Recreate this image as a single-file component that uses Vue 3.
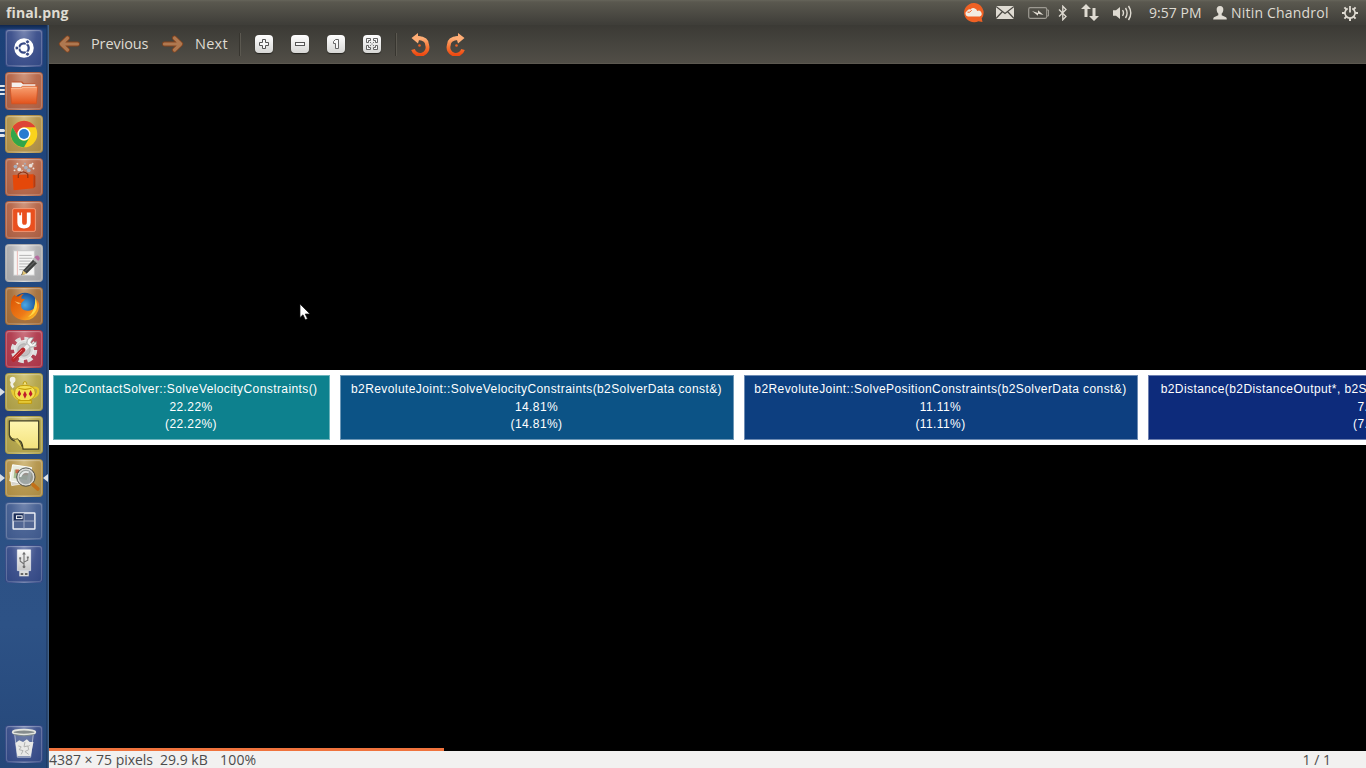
<script setup>
const nodes = [
  { name: 'b2ContactSolver::SolveVelocityConstraints()', pct: '22.22%', cls: 'teal' },
  { name: 'b2RevoluteJoint::SolveVelocityConstraints(b2SolverData const&)', pct: '14.81%', cls: 'azure' },
  { name: 'b2RevoluteJoint::SolvePositionConstraints(b2SolverData const&)', pct: '11.11%', cls: 'blue' },
  { name: 'b2Distance(b2DistanceOutput*, b2SimplexCache*, b2DistanceInput const*)', pct: '7.41%', cls: 'navy' }
]
const confetti = [[10, 8, 2], [14, 11, 2], [18, 7, 1], [21, 9, 2], [26, 7, 2], [29, 10, 1], [24, 12, 2], [17, 13, 1], [12, 5, 1], [20, 5, 1], [28, 5, 1], [9, 12, 1]]
</script>

<template>
  <div class="screen">
    <svg class="defs" width="0" height="0">
      <defs>
        <linearGradient id="orange" x1="0" y1="0" x2="0" y2="1"><stop offset="0" stop-color="#f9a273" /><stop offset="1" stop-color="#e2531c" /></linearGradient>
        <linearGradient id="hot" x1="0" y1="0" x2="0" y2="1"><stop offset="0" stop-color="#ffb078" /><stop offset=".55" stop-color="#f57433" /><stop offset="1" stop-color="#ee4a12" /></linearGradient>
        <linearGradient id="arrow" x1="0" y1="0" x2="0" y2="1"><stop offset="0" stop-color="#b98a66" /><stop offset="1" stop-color="#a8663f" /></linearGradient>
        <linearGradient id="silver" x1="0" y1="0" x2="0" y2="1"><stop offset="0" stop-color="#fafafa" /><stop offset="1" stop-color="#c7c7c7" /></linearGradient>
        <linearGradient id="note" x1="0" y1="0" x2="0" y2="1"><stop offset="0" stop-color="#fff6b0" /><stop offset="1" stop-color="#f3e27c" /></linearGradient>
        <radialGradient id="globe"><stop offset="0" stop-color="#4ca8e4" /><stop offset="1" stop-color="#174c94" /></radialGradient>
        <linearGradient id="fox" x1="0" y1="0" x2="1" y2="1"><stop offset="0" stop-color="#d95000" /><stop offset=".6" stop-color="#ee7a18" /><stop offset="1" stop-color="#ffd52e" /></linearGradient>
      </defs>
    </svg>

    <header class="panel">
      <span class="title">final.png</span>
      <div class="tray">
        <svg class="cloud" width="21" height="20" viewBox="0 0 21 20"><path d="M10.5 0a10 9.6 0 1 0 5 18.2l4 .8-.8-3.6A9.7 9.7 0 0 0 10.5 0Z" fill="#ef6124" /><path d="M5 13.5a3 3 0 0 1-1-5.6 3 3 0 0 1 3.5-1.5 4 4 0 0 1 6.8 1.5 3 3 0 0 1 2.5 5.6Z" fill="#f2ece2" /><path d="M4.5 9.2h2.2l2-2" fill="none" stroke="#ef6124" /></svg>
        <svg class="mail" width="18" height="13" viewBox="0 0 18 13"><path d="M0 0h18v13H0Z" fill="#dfdbd2" /><path d="m0 .5 9 7 9-7M0 12.5l6.5-7M18 12.5l-6.5-7" fill="none" stroke="#4b4943" stroke-width="1.2" /></svg>
        <svg class="battery" width="22" height="12" viewBox="0 0 22 12"><rect x=".7" y=".7" width="18" height="10.6" rx="1.5" fill="none" stroke="#9d9a92" stroke-width="1.2" /><path d="M19 3h1.5v6H19" fill="none" stroke="#9d9a92" /><path d="m4 4 6 2 0-2.8L15.5 8 10 6.7v2Z" fill="#e2ddd3" /></svg>
        <svg class="bt" width="10" height="16" viewBox="0 0 10 16"><path d="m1 4.5 7 7L4.8 14.8V1.2L8 4.5l-7 7" fill="none" stroke="#dfdbd2" stroke-width="1.3" /></svg>
        <svg class="net" width="18" height="17" viewBox="0 0 18 17"><path d="M5 0 0 5h3.5v8h3V5H10ZM13 17l5-5h-3.5V4h-3v8H8Z" fill="#dfdbd2" /></svg>
        <svg class="vol" width="21" height="16" viewBox="0 0 21 16"><path d="M1 5.3h3L8 2v12l-4-3.3H1Z" fill="#dfdbd2" /><path d="M10.5 5.2q2 2.8 0 5.6M13.5 3q3.2 5 0 10M16.5 1q4.6 7 0 14" fill="none" stroke="#dfdbd2" stroke-width="1.4" /></svg>
        <span class="clock">9:57 PM</span>
        <svg class="user" width="14" height="14" viewBox="0 0 14 14"><path d="M7 0C4.5 0 3.4 1.8 3.7 4c.2 2 .8 3 1.6 3.6v1.7L1 11.2Q.2 11.7.2 13.5h13.6q0-1.8-.8-2.3L8.7 9.3V7.6C9.5 7 10.1 6 10.3 4 10.6 1.8 9.5 0 7 0Z" fill="#dfdbd2" /></svg>
        <span class="username">Nitin Chandrol</span>
        <svg class="gear" width="16" height="16" viewBox="0 0 16 16"><g stroke="#dfdbd2" fill="none"><path d="M5.7 3.4a5.1 5.1 0 1 0 4.6 0" stroke-width="1.7" /><path d="M8 1v6.5" stroke-width="1.8" /><path d="M0 8h3M13 8h3M8 13v3M2.4 2.4l2 2M13.6 2.4l-2 2M2.4 13.6l2-2M13.6 13.6l-2-2" stroke-width="2" /></g></svg>
      </div>
    </header>

    <div class="body">
      <nav class="launcher">
        <div class="tile indigo">
          <svg viewBox="0 0 38 38"><circle cx="19" cy="19" r="10.3" fill="#fff" /><circle cx="19" cy="19" r="5" fill="none" stroke="#374985" stroke-width="2.4" /><path d="M19 19h-7M19 19l3.6-6.2M19 19l3.6 6.2" stroke="#fff" stroke-width="1" /><g fill="#374985" stroke="#fff"><circle cx="11.5" cy="19" r="2.1" /><circle cx="22.7" cy="12.5" r="2.1" /><circle cx="22.7" cy="25.5" r="2.1" /></g></svg>
        </div>
        <div class="tile rust">
          <div class="pips"><i /><i /><i /></div>
          <svg viewBox="0 0 38 38"><path d="M6 31V11l1-2h10l2 2h12v20Z" fill="#c15127" /><path d="M6 16v-6h10l2 2h13v4Z" fill="#f5f1ed" /><path d="M4.5 15.5h11l2-1.5h16L32 32.5H6Z" fill="url(#orange)" stroke="#d45220" stroke-width=".8" /><path d="M5.5 16.5H16l2-1.3h14" fill="none" stroke="#fbc09a" /></svg>
        </div>
        <div class="tile gold">
          <div class="pips two"><i /><i /></div>
          <svg viewBox="0 0 38 38"><circle cx="19" cy="19" r="14" fill="#f9d21c" /><path d="M6.9 12A14 14 0 0 1 31.1 12H19a7 7 0 0 0-6 10.5Z" fill="#dd4435" /><path d="M6.9 12A14 14 0 0 0 19 33l6-10.5a7 7 0 0 1-12 0Z" fill="#31a64a" /><circle cx="19" cy="19" r="6.8" fill="#fff" /><circle cx="19" cy="19" r="5.3" fill="#297cd0" /></svg>
        </div>
        <div class="tile rust">
          <svg viewBox="0 0 38 38"><g><circle v-for="(c, i) in confetti" :key="i" :cx="c[0]" :cy="c[1]" :r="c[2]" :fill="i % 3 ? '#e9e0da' : '#a7aebb'" /></g><path d="m7 17 22-1v15l-21 2Z" fill="#e4480a" /><path d="m29 16 2 2v11l-2 2Z" fill="#b93a0c" /><path d="M13 20v-4q5-5 10 0v4" fill="none" stroke="#8e3212" stroke-width="1.3" /></svg>
        </div>
        <div class="tile rust">
          <svg viewBox="0 0 38 38"><rect x="7" y="7" width="24" height="24" rx="1.5" fill="#e9501f" stroke="#f69c78" /><path d="M12 11h5v10q0 3 2.5 3t2.5-3V11h4v11q0 6-7 6t-7-6Z" fill="#fff" /><path d="M14 10h2v4h-2Z" fill="#e9501f" /></svg>
        </div>
        <div class="tile grey">
          <svg viewBox="0 0 38 38"><path d="M8 6h22v26H8Z" fill="#f5f5f4" stroke="#c5c5c5" /><path d="M12 6v26" stroke="#eab7b2" /><path d="M14 11h13M14 14h14M14 17h12M14 20h13M14 23h8M14 26h7" stroke="#aaa" stroke-width=".9" /><path d="m18 27 11-12 4 4-11 11-6 2Z" fill="#3d3f3e" /><path d="m18 27 4 3-5 2Z" fill="#e3c678" /><path d="m28 15 2-2 4 4-2 2Z" fill="#b8b8b8" /><path d="m30 13 1.5-1.5q2-1 3.5 1t0 3L34 17Z" fill="#b66c9f" /><path d="m20 28 11-11" stroke="#777" /></svg>
        </div>
        <div class="tile fire">
          <svg viewBox="0 0 38 38"><circle cx="20" cy="18" r="13" fill="url(#globe)" /><path d="M9 7q1 2 4 2 3-3 6-3-3 2-3 5l4 1-4 4q-1 8 7 8 5 0 8-4 2-4 1-8 5 5 2 12-4 10-14 10C9 34 4 26 5 18q0-7 4-11Z" fill="url(#fox)" /><path d="M31 10q6 15-8 21 8-6 8-21Z" fill="#ffd945" /><path d="m9 14 7 2-3 1Z" fill="#fac36b" /></svg>
        </div>
        <div class="tile red">
          <svg viewBox="0 0 38 38"><circle cx="19" cy="20" r="11.5" fill="none" stroke="#ddd" stroke-width="5" stroke-dasharray="5.42 3.61" /><circle cx="19" cy="20" r="10" fill="#d9d9d9" stroke="#f0f0f0" /><circle cx="19" cy="20" r="6.5" fill="#c3bfc0" stroke="#aaa" /><path d="m17 22 9-9" stroke="#ececec" stroke-width="4" /><path d="M29 7q-7-1-7 6l4 4q7 0 6-6l-4 3-2-2Z" fill="#f5f5f5" stroke="#888" stroke-width=".7" /><path d="m8 30 10-10" stroke="#b8282c" stroke-width="5" stroke-linecap="round" /><path d="m8 29 9-9" stroke="#ec7771" /></svg>
        </div>
        <div class="tile olive">
          <div class="focus" />
          <svg viewBox="0 0 38 38"><circle cx="7" cy="6" r="3" fill="#f0efe4" /><path d="M8 7q-4 4 0 7" fill="none" stroke="#f0efe4" stroke-width="3" /><path d="M27 15q7-2 7 3 0 6-8 7" fill="none" stroke="#e4c62c" stroke-width="2.5" /><path d="m11 21-4-5-2 1q2 9 8 11Z" fill="#e6ca35" /><path d="M9 20q0-8 11-8t11 8q0 5-7 8h-8Q9 26 9 20Z" fill="#f3df54" stroke="#c39c0b" /><path d="M13 15q7 3 14 0M13 28h14v3H13Z" fill="#e6ca35" stroke="#c39c0b" /><path d="M18 11q0-3 2-3t2 3" fill="#f7e77a" stroke="#b49308" /><g fill="#be1c2b"><path d="m14 17 2 4-2 3-2-3ZM20 18l2 4-2 4-2-4ZM26 17l2 4-2 3-2-3Z" /></g></svg>
        </div>
        <div class="tile olive">
          <svg viewBox="0 0 38 38"><path d="M3.500 4h31v30H18q-1-10-5-9-8 1-9.500-6Z" fill="url(#note)" stroke="#3e3d24" stroke-width="1.3" stroke-linejoin="round" /><path d="M3.500 19q3 6 9 4 3 4 5.500 11" fill="#d8c85b" stroke="#504c25" /></svg>
        </div>
        <div class="tile gold">
          <div class="focus" /><div class="active" />
          <svg viewBox="0 0 38 38"><path d="m4 13 21-3v14L6 27Z" fill="#d6d4cb" stroke="#fff" stroke-width=".7" /><path d="m7 5 20 3-3 18L4 22Z" fill="#e9ecdf" stroke="#fff" /><path d="m9 10 15 3-2 8-14-2Z" fill="#a7bf91" /><path d="M10 10h4v4h-4ZM18 12h5v4h-5Z" fill="#c96545" /><circle cx="21" cy="18" r="8.500" fill="#929a9a" fill-opacity=".85" stroke="#d9d9d6" stroke-width="1.8" /><circle cx="21" cy="18" r="9.700" fill="none" stroke="#494b48" stroke-width="1" /><path d="M15 18q2-7 9-5" fill="none" stroke="#e8ecec" stroke-width="2" /><path d="m28.500 26 5 4.500" stroke="#c17018" stroke-width="4" stroke-linecap="round" /></svg>
        </div>
        <div class="tile slate">
          <svg viewBox="0 0 38 38"><rect x="7.5" y="10.5" width="23" height="17" rx=".7" fill="#526693" stroke="#edf0f6" stroke-width="1.5" /><path d="M8 11h11v8H8Z" fill="#192c57" /><path d="M19 11v16M8 19h22" stroke="#a5afc7" /><rect x="11" y="13.5" width="6" height="3" fill="none" stroke="#fff" /></svg>
        </div>
        <div class="tile indigo">
          <svg viewBox="0 0 38 38"><path d="M12 4h14v22H12Z" fill="url(#silver)" stroke="#fff" stroke-width=".6" /><path d="M14 26h10v6H14Z" fill="#ddd" /><path d="M15.5 28.5h2.7v2h-2.700ZM20 28.500h2.700v2H20Z" fill="#666" /><path d="M19 8v14M19 19l-4-3v-3M19 17l4-2v-3" fill="none" stroke="#707070" stroke-width="1.1" /><path d="m19 6 2 3h-4Z" fill="#707070" /><circle cx="19" cy="22" r="1.5" fill="#707070" /><path d="M14 12h2v2h-2ZM22 11h2v2h-2Z" fill="#707070" /></svg>
        </div>
        <div class="tile indigo trash">
          <svg viewBox="0 0 38 38"><path d="m9 7 3 26h14l3-26" fill="#6d7da5" fill-opacity=".55" stroke="#c8cede" stroke-width=".8" /><path d="m10 18 4-3 4 2 4-3 3 3 4 0-3 15H12Z" fill="#e9e9e7" /><path d="m13 21 3 1-2 3 4 1-2 4M20 17l-1 5 4-1 1 4-4 2 4 3M25 20l-2 2" fill="none" stroke="#afb0ae" /><ellipse cx="19" cy="6.500" rx="12" ry="2.600" fill="#858c8d" stroke="#e3e5df" stroke-width="1.8" /><path d="M8 9q11 3 22 0" fill="none" stroke="#7d8887" /></svg>
        </div>
      </nav>

      <main class="viewer">
        <div class="toolbar">
          <svg class="prev" width="22" height="18" viewBox="0 0 22 18"><path d="M19.500 9H4M9.500 3 3.300 9l6.200 6" fill="none" stroke="#85451f" stroke-width="4.800" stroke-linecap="round" stroke-linejoin="round" /><path d="M19.500 9H4M9.500 3 3.300 9l6.200 6" fill="none" stroke="#af7850" stroke-width="3.200" stroke-linecap="round" stroke-linejoin="round" /></svg>
          <span class="label previous">Previous</span>
          <svg class="next" width="22" height="18" viewBox="0 0 22 18"><path d="M2.500 9H18M12.500 3 18.700 9l-6.200 6" fill="none" stroke="#85451f" stroke-width="4.800" stroke-linecap="round" stroke-linejoin="round" /><path d="M2.500 9H18M12.500 3 18.700 9l-6.200 6" fill="none" stroke="#af7850" stroke-width="3.200" stroke-linecap="round" stroke-linejoin="round" /></svg>
          <span class="label nexttext">Next</span>
          <i class="sep" />
          <div class="zoom-buttons">
            <svg viewBox="0 0 18 18"><path d="M7.500 4.500h3v3h3v3h-3v3h-3v-3h-3v-3h3Z" fill="#f8f8f8" stroke="#555" /></svg>
            <svg viewBox="0 0 18 18"><rect x="4.500" y="7.500" width="9" height="3" fill="#f8f8f8" stroke="#555" /></svg>
            <svg viewBox="0 0 18 18"><path d="M8.500 4.500h3v9h-3v-5h-2v-2Z" fill="#f8f8f8" stroke="#666" /></svg>
            <svg viewBox="0 0 18 18"><path d="M3.500 7.500v-4h4v2h-2v2ZM10.500 3.500h4v4h-2v-2h-2ZM3.500 10.500h2v2h2v2h-4ZM14.500 10.500v4h-4v-2h2v-2Z" fill="#f8f8f8" stroke="#555" stroke-width=".9" /><path d="m7 7 1.300 1.300M11 7 9.700 8.300M7 11l1.300-1.300M11 11 9.700 9.700" stroke="#777" /></svg>
          </div>
          <i class="sep second" />
          <svg class="rotate" width="22" height="25" viewBox="0 0 22 25"><path d="M9 7q9 .2 9.200 7.200A7.200 7.200 0 0 1 4 18.500" fill="none" stroke="url(#hot)" stroke-width="3.800" /><path d="m2.500 7 6.500-5v3L14 6.500l-4 2.500-1 3.500Z" fill="#ffad75" /><circle cx="10.500" cy="14.500" r="1.300" fill="#ee6122" /></svg>
          <svg class="rotate right" width="22" height="25" viewBox="0 0 22 25"><path d="M13 7q-9 .2-9.200 7.200A7.200 7.200 0 0 0 18 18.500" fill="none" stroke="url(#hot)" stroke-width="3.800" /><path d="m19.500 7-6.500-5v3L8 6.500l4 2.500 1 3.500Z" fill="#ffad75" /><circle cx="11.500" cy="14.500" r="1.300" fill="#ee6122" /></svg>
        </div>
        <div class="canvas">
          <div class="graph">
            <div v-for="n in nodes" :key="n.name" class="node" :class="n.cls">
              <p class="fn">{{ n.name }}</p>
              <p class="pc">{{ n.pct }}</p>
              <p class="pc">({{ n.pct }})</p>
            </div>
          </div>
          <div class="scroll" />
          <svg class="cursor" width="12" height="19" viewBox="0 0 12 19"><path d="M1 1v13.500l3-2.700 2.300 5 2.200-1-2.300-4.800H11Z" fill="#fff" stroke="#111" stroke-width=".7" /></svg>
        </div>
        <footer class="status">
          <span class="dims">4387 × 75 pixels</span><span class="size">29.9 kB</span><span class="pct">100%</span><span class="page">1 / 1</span>
        </footer>
      </main>
    </div>
  </div>
</template>

<style>
html, body { margin: 0; overflow: hidden; background: #000; }
</style>
<style scoped>
.screen { width: 1366px; height: 768px; display: flex; flex-direction: column; overflow: hidden; font: 14px "Open Sans", "Noto Sans", sans-serif; }
.defs { position: absolute; }
svg { display: block; flex: none; }
span { white-space: nowrap; }
.panel { height: 25px; flex: none; display: flex; align-items: center; justify-content: space-between; background: linear-gradient(#66655a 0, #5a584f 2px, #3f3e39 24px); color: #dfdbd2; }
.title { margin: -1px 0 0 6px; font-weight: 700; font-size: 14px; letter-spacing: .1px; }
.tray { width: 403px; height: 25px; display: flex; align-items: center; }
.mail { margin-left: 12px; }
.battery { margin-left: 14px; }
.bt { margin-left: 8px; }
.net { margin-left: 13px; }
.vol { margin-left: 13px; }
.clock { margin: -1px 0 0 16px; width: 54px; font-size: 14px; letter-spacing: .05px; }
.user { margin-left: 10px; }
.username { margin: -1px 0 0 4px; width: 99px; font-size: 14px; letter-spacing: .2px; }
.gear { margin-left: 12px; }
.body { flex: 1; display: flex; min-height: 0; }
.launcher { width: 49px; flex: none; box-sizing: border-box; padding: 4px 0 5px 5px; display: flex; flex-direction: column; gap: 5px; background: linear-gradient(90deg, transparent 46px, #183158 47px, #416187 48px), linear-gradient(#10264e 0, #1c4178 5px, #244b82 300px, #22407a 390px, #2c5084 440px, #2d5286 600px, #254779 743px); }
.tile { position: relative; width: 38px; height: 38px; box-sizing: border-box; flex: none; border: .5px solid transparent; background-clip: content-box; border-radius: 4px; box-shadow: inset 0 0 0 1px rgba(255,255,255,.17), inset 0 1px 2px rgba(255,255,255,.2); }
.tile > svg { width: 36px; height: 36px; }
.trash { margin-top: auto; }
.indigo { background: radial-gradient(ellipse at 50% 0, #7886b1, #42558f 50%, #304682); }
.rust { background: radial-gradient(ellipse at 50% 0, #d0967c, #b86c50 50%, #a75c40); }
.gold { background: radial-gradient(ellipse at 50% 0, #d3bc80, #b79953 50%, #aa8940); }
.grey { background: radial-gradient(ellipse at 50% 0, #ddd, #b4b4b5 50%, #a3a3a4); }
.fire { background: radial-gradient(ellipse at 50% 0, #c89d6f, #a97643 50%, #9d6836); }
.red { background: radial-gradient(ellipse at 50% 0, #cc7380, #b34254 50%, #a73346); }
.olive { background: radial-gradient(ellipse at 50% 0, #d3c77d, #b7a952 50%, #a79944); }
.slate { background: radial-gradient(ellipse at 50% 0, #7185ae, #4c6596 50%, #3d578a); }
.pips { position: absolute; left: -6px; top: 12px; display: grid; gap: 2px; }
.pips.two { top: 13px; gap: 2px; }
.pips i { width: 5px; height: 2px; background: #e1e5e9; border-radius: 0 2px 2px 0; }
.pips.two i { height: 3px; }
.focus { position: absolute; left: -6px; top: 14px; border-left: 5px solid #d7dde3; border-top: 4px solid transparent; border-bottom: 4px solid transparent; }
.active { position: absolute; right: -6px; top: 14px; border-right: 5px solid #dde2e7; border-top: 4px solid transparent; border-bottom: 4px solid transparent; }
.viewer { width: 1317px; display: flex; flex-direction: column; }
.toolbar { height: 39px; flex: none; box-sizing: border-box; border-bottom: 1px solid #5c5850; display: flex; align-items: center; background: linear-gradient(#3b3a35, #514e47); color: #dfdbd2; }
.prev { margin-left: 9px; }
.label { font-size: 14.5px; margin-top: -1px; }
.previous { margin-left: 11px; width: 58px; letter-spacing: -.1px; }
.next { margin-left: 13px; }
.nexttext { margin-left: 11px; width: 34px; letter-spacing: .25px; }
.sep { width: 1px; height: 23px; margin-left: 10px; background: #37352f; border-right: 1px solid #5b5850; }
.zoom-buttons { margin-left: 14px; display: flex; gap: 18px; }
.zoom-buttons svg { width: 18px; height: 18px; border-radius: 4px; background: linear-gradient(#fff, #d7d7d5); box-shadow: 0 1px 1px #25241f; }
.second { margin-left: 14px; }
.rotate { margin: -1px 0 0 12px; }
.rotate.right { margin-left: 14px; }
.canvas { position: relative; flex: 1; display: flex; flex-direction: column; overflow: hidden; background: #000; }
.graph { height: 65px; margin-top: 306px; padding: 5px 4px; background: #fff; display: flex; gap: 10px; overflow: hidden; }
.node { width: 394px; height: 65px; box-sizing: border-box; flex: none; padding: 4px 1px 0 0; border: 1px solid rgba(255,255,255,.4); color: #fff; font: 12px/18px "Liberation Sans", Arial, sans-serif; text-align: center; }
.node p { margin: 0; white-space: nowrap; }
.node p:last-child { margin-top: -1px; }
.fn, .pc { letter-spacing: .41px; }
.teal { width: 277px; background: #0d818e; }
.azure { background: #0c5386; }
.blue { background: #0d3f80; }
.navy { width: 456px; background: #0d2b7b; }
.scroll { margin-top: auto; height: 3px; width: 395px; background: #f0733d; }
.cursor { position: absolute; left: 250px; top: 239px; }
.status { height: 17px; flex: none; display: flex; align-items: center; background: #f2f1f0; color: #4c4c4c; font-size: 14px; line-height: 17px; }
.dims { width: 104px; margin-left: 0; letter-spacing: -.03px; }
.size { width: 48px; margin-left: 7px; letter-spacing: 0; }
.pct { margin-left: 12px; letter-spacing: .2px; }
.page { margin: 0 35px 0 auto; }
</style>
